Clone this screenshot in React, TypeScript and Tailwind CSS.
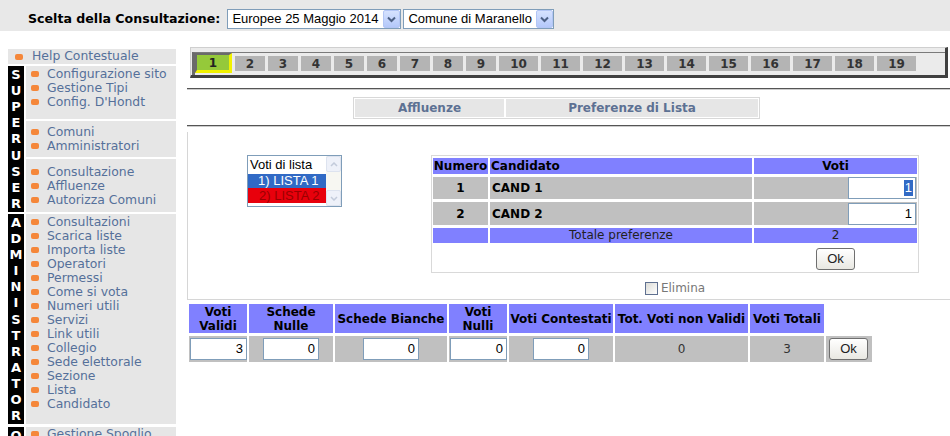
import React from "react";

const superGroups = [
  { items: ["Configurazione sito", "Gestione Tipi", "Config. D'Hondt"], pad: "pt-[1px] pb-[10px]" },
  { items: ["Comuni", "Amministratori"], pad: "pt-[4px] pb-[4px]" },
  { items: ["Consultazione", "Affluenze", "Autorizza Comuni"], pad: "pt-[6px] pb-[5px]" },
];

const adminItems = [
  "Consultazioni",
  "Scarica liste",
  "Importa liste",
  "Operatori",
  "Permessi",
  "Come si vota",
  "Numeri utili",
  "Servizi",
  "Link utili",
  "Collegio",
  "Sede elettorale",
  "Sezione",
  "Lista",
  "Candidato",
];

const tabs = Array.from({ length: 19 }, (_, i) => i + 1);

function Bullet() {
  return <span className="inline-block w-[8px] h-[6px] rounded-[2px] bg-[#f5873a] shrink-0" />;
}

function MenuItem({ label }: { label: string }) {
  return (
    <div className="flex items-center h-[14px] whitespace-nowrap">
      <span className="ml-[5px] flex"><Bullet /></span>
      <span className="ml-[8px]">{label}</span>
    </div>
  );
}

function Letters({ word }: { word: string }) {
  return (
    <div className="w-[16px] bg-black flex flex-col text-white font-bold text-[13px]">
      {word.split("").map((c, i) => (
        <div key={i} className="flex-1 flex items-center justify-center leading-none">
          {c}
        </div>
      ))}
    </div>
  );
}

function FakeSelect({ text, className }: { text: string; className: string }) {
  return (
    <div className={"flex items-center h-[20px] border border-[#7f9db9] bg-white " + className}>
      <span className="flex-1 pl-[4px] text-[13px] leading-[18px] font-['Liberation_Sans',Arial,sans-serif] text-black whitespace-nowrap overflow-hidden">
        {text}
      </span>
      <span className="w-[17px] h-[18px] rounded-[2px] border border-[#b3c6f5] bg-linear-to-b from-[#d6e2fe] to-[#b4c8fa] flex items-center justify-center">
        <svg width="9" height="7" viewBox="0 0 9 7">
          <path d="M1 1.5 L4.5 5 L8 1.5" fill="none" stroke="#4d6185" strokeWidth="2" />
        </svg>
      </span>
    </div>
  );
}

function ScrollBtn({ up }: { up?: boolean }) {
  return (
    <div className="w-[15px] h-[16px] rounded-[2px] border border-[#dde3ef] bg-[#eef1f9] flex items-center justify-center">
      <svg width="8" height="5" viewBox="0 0 8 5">
        <path d={up ? "M1 4 L4 1 L7 4" : "M1 1 L4 4 L7 1"} fill="none" stroke="#c3cbdb" strokeWidth="1.5" />
      </svg>
    </div>
  );
}

function NumInput({ value, selected, className }: { value: string; selected?: boolean; className: string }) {
  return (
    <div
      className={
        "h-[22px] border border-[#7f9db9] bg-white flex items-center justify-end pr-[2px] text-[13px] font-['Liberation_Sans',Arial,sans-serif] text-black " +
        className
      }
    >
      {selected ? <span className="bg-[#316ac5] text-white px-[1px] leading-[16px]">{value}</span> : <span className="pr-[1px]">{value}</span>}
    </div>
  );
}

function OkButton() {
  return (
    <div className="w-[39px] h-[22px] border border-[#6f6f6f] rounded-[3px] bg-linear-to-b from-white to-[#e9e8e2] flex items-center justify-center text-[13px] font-['Liberation_Sans',Arial,sans-serif] text-[#222]">
      Ok
    </div>
  );
}

export default function App() {
  const hdr = "bg-[#8080ff] font-bold text-[12px] text-black";
  const cell = "bg-[#c0c0c0]";
  return (
    <div className="w-[950px] h-[436px] overflow-hidden bg-white font-['DejaVu_Sans',sans-serif]">
      {/* Header */}
      <div className="h-[31px] bg-[#e8e8e8] flex items-start pt-[9px] pl-[28px]">
        <span className="text-[12.6px] font-bold text-black leading-[20px] whitespace-nowrap">Scelta della Consultazione:</span>
        <FakeSelect text="Europee 25 Maggio 2014" className="ml-[7px] w-[174px]" />
        <FakeSelect text="Comune di Maranello" className="ml-[2px] w-[151px]" />
      </div>

      <div className="flex mt-[16px]">
        {/* Sidebar */}
        <div className="w-[168px] ml-[8px] mt-[2px] shrink-0 text-[12.4px] text-[#55709a]">
          <div className="h-[15px] bg-[#e6e6e6] flex items-center whitespace-nowrap">
            <span className="ml-[7px] flex"><Bullet /></span>
            <span className="ml-[9px]">Help Contestuale</span>
          </div>

          <div className="mt-[2px] flex">
            <Letters word="SUPERUSER" />
            <div className="ml-[2px] flex-1 flex flex-col gap-[2px]">
              {superGroups.map((g, i) => (
                <div key={i} className={"bg-[#e6e6e6] " + g.pad}>
                  {g.items.map((it) => (
                    <MenuItem key={it} label={it} />
                  ))}
                </div>
              ))}
            </div>
          </div>

          <div className="mt-[2px] flex">
            <Letters word="ADMINISTRATOR" />
            <div className="ml-[2px] flex-1 bg-[#e6e6e6] pt-[1px] pb-[13px]">
              {adminItems.map((it) => (
                <MenuItem key={it} label={it} />
              ))}
            </div>
          </div>

          <div className="mt-[3px] flex h-[146px]">
            <Letters word="OPERATORE" />
            <div className="ml-[2px] flex-1 bg-[#e6e6e6]">
              <MenuItem label="Gestione Spoglio" />
            </div>
          </div>
        </div>

        {/* Main */}
        <div className="ml-[11px] flex-1 min-w-0">
          {/* Section tabs */}
          <div className="ml-[3px] w-[758px] h-[31px] bg-[#ebebeb] border-t border-l border-t-[#cfcfcf] border-l-[#cfcfcf] border-r-[3px] border-b-[3px] border-r-[#404040] border-b-[#404040]">
            <div className="mt-[4px] ml-[1px] h-[23px] border-t border-t-[#7a7a7a] border-l-[3px] border-l-[#6a6a6a] flex items-start gap-[3px]">
              {tabs.map((n) =>
                n === 1 ? (
                  <div
                    key={n}
                    className="w-[37px] h-[20px] border-t-2 border-l-2 border-t-[#6a6a6a] border-l-[#6a6a6a] border-r-[3px] border-b-[3px] border-r-[#f2f200] border-b-[#f2f200] bg-[#95c93a] flex items-center justify-center text-[12px] font-bold text-[#222] leading-none"
                  >
                    1
                  </div>
                ) : (
                  <div
                    key={n}
                    className={
                      "mt-[3px] h-[15px] bg-[#b4b4b4] flex items-center justify-center text-[12px] font-bold text-[#333] leading-none " +
                      (n < 10 ? "w-[30px]" : "w-[39px]")
                    }
                  >
                    {n}
                  </div>
                )
              )}
            </div>
          </div>

          <div className="mt-[10px] h-[2px] border-t border-t-[#555] border-b border-b-[#cccccc]" />

          {/* Sub tabs */}
          <div className="mt-[7px] ml-[166px] w-[407px] h-[22px] border border-[#d8d8d8] p-[1px] flex gap-[2px] text-[12px] font-bold text-[#5d7193]">
            <div className="w-[149px] bg-[#e6e6e6] flex items-center justify-center">Affluenze</div>
            <div className="flex-1 bg-[#e6e6e6] flex items-center justify-center">Preferenze di Lista</div>
          </div>

          <div className="mt-[6px] h-[2px] border-t border-t-[#555] border-b border-b-[#cccccc]" />

          {/* Preferences box */}
          <div className="mt-[5px] h-[168px] border-l border-b border-[#d6d6d6] flex items-start pt-[23px]">
            <div className="ml-[59px] w-[95px] h-[52px] border border-[#7f9db9] bg-white flex text-[13px] font-['Liberation_Sans',Arial,sans-serif]">
              <div className="flex-1 flex flex-col">
                <div className="h-[18px] leading-[18px] pl-[2px] text-black">Voti di lista</div>
                <div className="h-[14px] leading-[14px] pl-[10px] bg-[#316ac5] text-white">1) LISTA 1</div>
                <div className="h-[15px] leading-[15px] pl-[11px] bg-[#e8000c] text-[#9a0000]">2) LISTA 2</div>
              </div>
              <div className="w-[15px] flex flex-col justify-between bg-[#f7f7f2]">
                <ScrollBtn up />
                <ScrollBtn />
              </div>
            </div>

            <div className="ml-[89px] flex flex-col items-center">
              <div className="w-[488px] border border-[#d9d9d9] px-[1px] pt-[2px] pb-[1px] grid grid-cols-[55px_262px_163px] gap-x-[2px] gap-y-[3px] text-[12px]">
                <div className={hdr + " h-[16px] leading-[16px] text-center"}>Numero</div>
                <div className={hdr + " h-[16px] leading-[16px] pl-[1px]"}>Candidato</div>
                <div className={hdr + " h-[16px] leading-[16px] text-center"}>Voti</div>

                <div className={cell + " h-[22px] flex items-center justify-center font-bold text-black"}>1</div>
                <div className={cell + " h-[22px] flex items-center pl-[2px] font-bold text-black"}>CAND 1</div>
                <div className={cell + " h-[22px] flex justify-end"}>
                  <NumInput value="1" selected className="w-[68px] mr-[1px]" />
                </div>

                <div className={cell + " h-[23px] flex items-center justify-center font-bold text-black"}>2</div>
                <div className={cell + " h-[23px] flex items-center pl-[2px] font-bold text-black"}>CAND 2</div>
                <div className={cell + " h-[23px] flex items-center justify-end"}>
                  <NumInput value="1" className="w-[68px] mr-[1px]" />
                </div>

                <div className="h-[15px] bg-[#8080ff]" />
                <div className="h-[15px] bg-[#8080ff] leading-[15px] text-center text-[#222]">Totale preferenze</div>
                <div className="h-[15px] bg-[#8080ff] leading-[15px] text-center text-[#222]">2</div>

                <div className="h-[25px]" />
                <div className="h-[25px]" />
                <div className="h-[25px] flex items-center justify-center">
                  <OkButton />
                </div>
              </div>

              <div className="mt-[9px] flex items-center gap-[3px]">
                <span className="w-[13px] h-[13px] border border-[#5f7090] bg-linear-to-br from-[#dcdcd7] to-white" />
                <span className="text-[12px] text-[#777] leading-[13px]">Elimina</span>
              </div>
            </div>
          </div>

          {/* Totals table */}
          <div className="mt-[4px] ml-[2px] grid grid-cols-[58px_84px_112px_58px_104px_133px_74px_46px] gap-x-[2px] gap-y-[3px] w-max">
            <div className={hdr + " h-[29px] flex items-center justify-center text-center leading-[14px]"}>Voti<br />Validi</div>
            <div className={hdr + " h-[29px] flex items-center justify-center text-center leading-[14px]"}>Schede<br />Nulle</div>
            <div className={hdr + " h-[29px] flex items-center justify-center whitespace-nowrap"}>Schede Bianche</div>
            <div className={hdr + " h-[29px] flex items-center justify-center text-center leading-[14px]"}>Voti<br />Nulli</div>
            <div className={hdr + " h-[29px] flex items-center justify-center whitespace-nowrap"}>Voti Contestati</div>
            <div className={hdr + " h-[29px] flex items-center justify-center whitespace-nowrap"}>Tot. Voti non Validi</div>
            <div className={hdr + " h-[29px] flex items-center justify-center whitespace-nowrap"}>Voti Totali</div>
            <div className="h-[29px]" />

            <div className={cell + " h-[26px] flex items-center justify-center"}>
              <NumInput value="3" className="w-[57px] ml-[1px]" />
            </div>
            <div className={cell + " h-[26px] flex items-center justify-center"}>
              <NumInput value="0" className="w-[56px]" />
            </div>
            <div className={cell + " h-[26px] flex items-center justify-center"}>
              <NumInput value="0" className="w-[56px]" />
            </div>
            <div className={cell + " h-[26px] flex items-center justify-center"}>
              <NumInput value="0" className="w-[57px] ml-[1px]" />
            </div>
            <div className={cell + " h-[26px] flex items-center justify-center"}>
              <NumInput value="0" className="w-[56px]" />
            </div>
            <div className={cell + " h-[26px] flex items-center justify-center text-[12px] text-[#333]"}>0</div>
            <div className={cell + " h-[26px] flex items-center justify-center text-[12px] text-[#333]"}>3</div>
            <div className={cell + " h-[26px] flex items-center pl-[3px]"}>
              <OkButton />
            </div>
          </div>
        </div>
      </div>
    </div>
  );
}
